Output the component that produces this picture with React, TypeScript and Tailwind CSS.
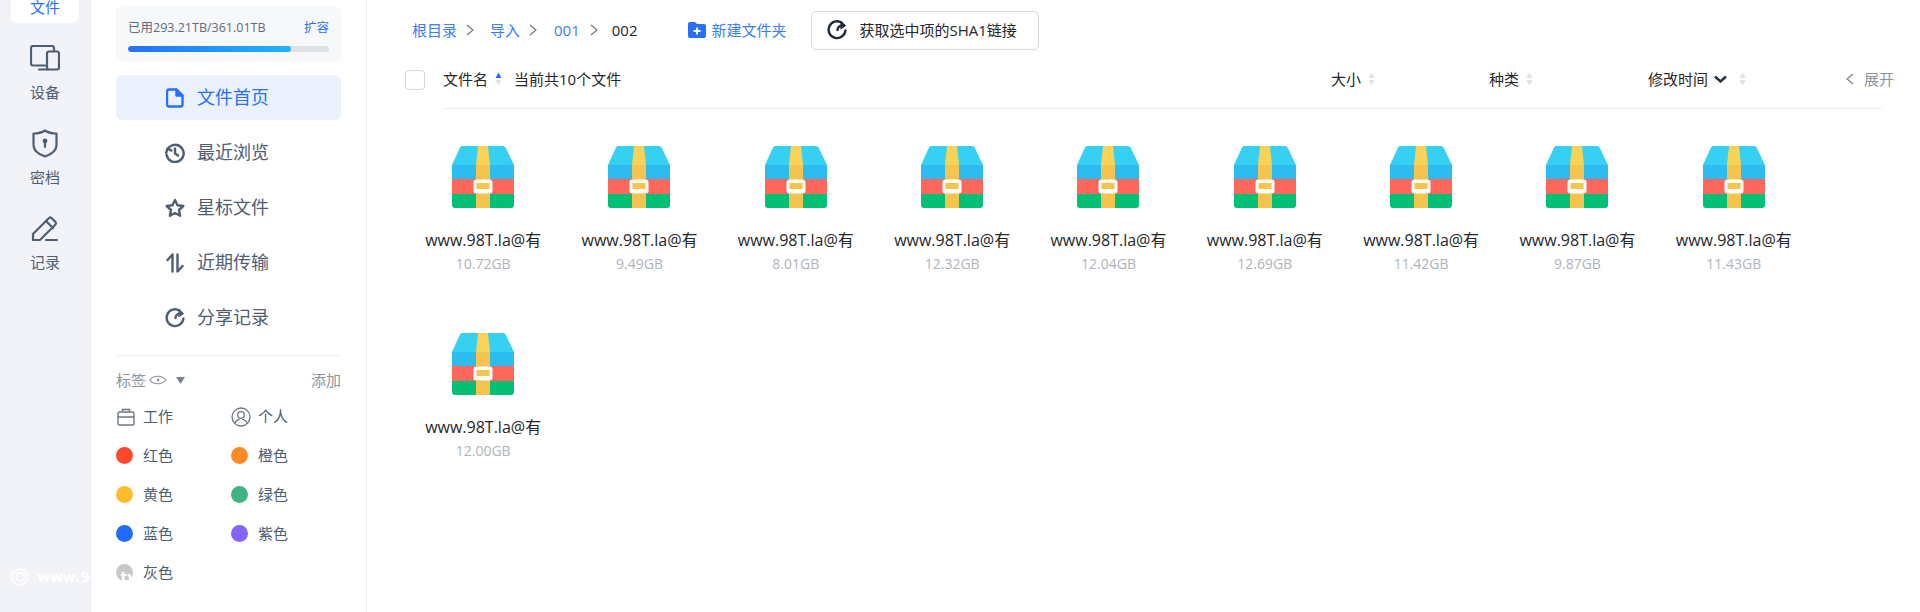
import React from "react";

const font = { fontFamily: '"Open Sans", "Noto Sans CJK SC", "Liberation Sans", sans-serif' };

function RailItem({ label, children }: { label: string; children: React.ReactNode }) {
  return (
    <div className="flex flex-col items-center h-[85px] text-[15px] leading-[20px] text-[#4d5d72]">
      <div className="h-[34px] flex items-center justify-center">{children}</div>
      <div className="mt-[7px]">{label}</div>
    </div>
  );
}

function NavItem({ label, active, children }: { label: string; active?: boolean; children: React.ReactNode }) {
  return (
    <div className={`h-[45px] mb-[10px] rounded-[6px] flex items-center pl-[49px] text-[18px] ${active ? "bg-[#ebf2fd] text-[#2670fb]" : "text-[#4d5d72]"}`}>
      <div className="w-[20px] h-[20px] mr-[12px] flex items-center justify-center">{children}</div>
      <span>{label}</span>
    </div>
  );
}

function Sort({ active }: { active?: boolean }) {
  return (
    <svg width="7" height="14" viewBox="0 0 7 14" className="ml-[7px]">
      <path d="M3.5 0.5 L6.5 6 L0.5 6 Z" fill={active ? "#2670fb" : "#dfe1e6"} />
      <path d="M3.5 13.5 L6.5 8 L0.5 8 Z" fill="#dfe1e6" />
    </svg>
  );
}

function RarIcon() {
  return (
    <svg width="62" height="64" viewBox="0 0 62 64">
      <path d="M10 1 H51 a3 3 0 0 1 2.6 1.5 L62 20 H0 L8 2.5 A3 3 0 0 1 10 1 Z" fill="#36d0f3" />
      <rect x="0" y="20" width="62" height="15" fill="#2dbcef" />
      <rect x="0" y="34" width="62" height="15" fill="#fe675c" />
      <path d="M0 49 H62 V60 a3 3 0 0 1 -3 3 H3 a3 3 0 0 1 -3 -3 Z" fill="#04c076" />
      <path d="M26 1 H36 L38 20 H24 Z" fill="#f8d358" />
      <rect x="24" y="20" width="14" height="43" fill="#f4c44e" />
      <rect x="21.5" y="34.5" width="19" height="14" rx="3" fill="#ffffff" />
      <rect x="24.5" y="38" width="13" height="6" fill="#f4c44e" />
    </svg>
  );
}

function FileCell({ size }: { size: string }) {
  return (
    <div className="h-[187px] flex flex-col items-center pt-[36px]">
      <RarIcon />
      <div className="mt-[20px] h-[22px] w-[122px] text-center overflow-hidden whitespace-nowrap text-[16px] leading-[22px] text-[#25262b]">www.98T.la@有</div>
      <div className="mt-[3px] text-[14px] leading-[20px] text-[#afb3bb]">{size}</div>
    </div>
  );
}

function Tag({ label, color, icon }: { label: string; color?: string; icon?: React.ReactNode }) {
  return (
    <div className="h-[39px] flex items-center text-[15px] text-[#4d5d72]">
      {color ? <span className="w-[17px] h-[17px] rounded-full mr-[10px]" style={{ backgroundColor: color }} /> : <span className="w-[20px] h-[20px] mr-[7px] flex items-center justify-center">{icon}</span>}
      <span>{label}</span>
    </div>
  );
}

const S = { fill: "none", stroke: "currentColor", strokeWidth: 2, strokeLinecap: "round", strokeLinejoin: "round" } as const;

function ShareIcon({ w }: { w: number }) {
  return (
    <svg width={w} height={w} viewBox="0 0 20 20" {...S} strokeWidth={2.4}>
      <path d="M14.5 2.6 A8.4 8.4 0 1 0 18.4 10.5" />
      <path d="M10.5 10 C10.5 7.5 12.5 5.8 15 5.8" />
      <path d="M14.2 1.6 L18.6 5.6 L14.2 8.8 Z" fill="currentColor" strokeWidth={1} />
    </svg>
  );
}

function Chevron() {
  return (
    <svg width="8" height="12" viewBox="0 0 8 12" fill="none" stroke="#6e7278" strokeWidth="1.1"><path d="M1 1 L7 6 L1 11" /></svg>
  );
}

export default function App() {
  const sizes = ["10.72GB", "9.49GB", "8.01GB", "12.32GB", "12.04GB", "12.69GB", "11.42GB", "9.87GB", "11.43GB", "12.00GB"];
  return (
    <div className="relative w-[1920px] h-[612px] overflow-hidden flex bg-white" style={font}>
      <aside className="w-[91px] shrink-0 bg-[#f1f3f8] border-r border-[#e9ebf0] flex flex-col items-center">
        <div className="w-[68px] h-[23px] bg-white rounded-b-[6px] text-center text-[15px] leading-[15px] text-[#2670fb]">文件</div>
        <div className="mt-[18px] w-full">
          <RailItem label="设备">
            <svg width="30" height="26" viewBox="0 0 30 26" className="text-[#4d5d72]" {...S} strokeWidth={2.2}>
              <path d="M15 20.5 H3 a2 2 0 0 1 -2 -2 V3 a2 2 0 0 1 2 -2 H22 a2 2 0 0 1 2 2 V6" />
              <rect x="17" y="6.5" width="12" height="18" rx="2" />
              <path d="M9 24.5 H17" />
            </svg>
          </RailItem>
          <RailItem label="密档">
            <svg width="26" height="29" viewBox="0 0 26 29" className="text-[#4d5d72]" {...S} strokeWidth={2.2}>
              <path d="M13 1.5 C16 3.5 20 4.5 24.5 4.5 V16 C24.5 21.5 19 25.5 13 27.5 C7 25.5 1.5 21.5 1.5 16 V4.5 C6 4.5 10 3.5 13 1.5 Z" />
              <circle cx="13" cy="12" r="2.4" fill="currentColor" stroke="none" />
              <path d="M13 12 V18" />
            </svg>
          </RailItem>
          <RailItem label="记录">
            <svg width="28" height="27" viewBox="0 0 28 27" className="text-[#4d5d72]" {...S} strokeWidth={2.2}>
              <path d="M2 25 V19 L18 3 a2 2 0 0 1 2.5 0 L24.5 7 a2 2 0 0 1 0 2.5 L9 25 Z" />
              <path d="M15 6 L22 13" />
              <path d="M15 25 H26" />
            </svg>
          </RailItem>
        </div>
      </aside>

      <nav className="w-[276px] shrink-0 border-r border-[#f0f0f2] px-[25px] pt-[6px]">
        <div className="h-[56px] rounded-[6px] bg-[#f7f8fa] px-[12px] pt-[14px]">
          <div className="flex justify-between text-[12.5px] leading-[16px]">
            <span className="text-[#5f6b7b]">已用293.21TB/361.01TB</span>
            <span className="text-[#2670fb]">扩容</span>
          </div>
          <div className="mt-[10px] h-[6px] rounded-full bg-[#dfe1e6] overflow-hidden">
            <div className="h-full w-[81%] rounded-full bg-gradient-to-r from-[#2670fb] to-[#25b3fb]" />
          </div>
        </div>
        <div className="mt-[13px]">
          <NavItem label="文件首页" active>
            <svg width="18" height="20" viewBox="0 0 18 20" {...S} strokeWidth={2.4}>
              <path d="M3 1.5 H10.5 L16.5 7.5 V16.5 a2 2 0 0 1 -2 2 H3 a2 2 0 0 1 -2 -2 V3.5 a2 2 0 0 1 2 -2 Z" />
              <path d="M10.5 1.5 L16.5 7.5 H10.5 Z" fill="currentColor" />
            </svg>
          </NavItem>
          <NavItem label="最近浏览">
            <svg width="20" height="20" viewBox="0 0 20 20" {...S} strokeWidth={2.4}>
              <path d="M3 5.5 A8.6 8.6 0 1 1 1.6 12" />
              <path d="M1.2 9.8 L2.6 5.4 L6.4 7.6" />
              <path d="M10 5.5 V10.5 L13 12.5" />
            </svg>
          </NavItem>
          <NavItem label="星标文件">
            <svg width="20" height="20" viewBox="0 0 20 20" {...S} strokeWidth={2.4}>
              <path d="M10 2 L12.5 7.2 L18.3 8 L14 12 L15.1 17.8 L10 15 L4.9 17.8 L6 12 L1.7 8 L7.5 7.2 Z" />
            </svg>
          </NavItem>
          <NavItem label="近期传输">
            <svg width="18" height="20" viewBox="0 0 18 20" {...S} strokeWidth={2.4}>
              <path d="M6.5 18.5 V1.5 L1.5 7" />
              <path d="M11.5 1.5 V18.5 L16.5 13" />
            </svg>
          </NavItem>
          <NavItem label="分享记录">
            <ShareIcon w={20} />
          </NavItem>
        </div>
        <div className="mt-[15px] border-t border-[#f0f0f2] pt-[14px]">
          <div className="flex items-center h-[20px] text-[15px] text-[#8d939c]">
            <span>标签</span>
            <svg width="18" height="14" viewBox="0 0 18 14" className="ml-[3px]" fill="none" stroke="#8d939c" strokeWidth="1.2">
              <path d="M1 7 C4 2 13 2 17 7 C13 12 4 12 1 7 Z" />
              <circle cx="9" cy="7" r="0.8" fill="#8d939c" />
            </svg>
            <svg width="9" height="7" viewBox="0 0 9 7" className="ml-[9px]"><path d="M0 0 H9 L4.5 7 Z" fill="#7d838c" /></svg>
            <span className="ml-auto">添加</span>
          </div>
          <div className="mt-[7px] grid grid-cols-[115px_1fr]">
            <Tag label="工作" icon={<svg width="18" height="18" viewBox="0 0 18 18" fill="none" stroke="#6f7882" strokeWidth="1.4"><rect x="1" y="4" width="16" height="13" rx="1.5" /><path d="M5.5 4 V1.5 H12.5 V4 M1 9 H17" /></svg>} />
            <Tag label="个人" icon={<svg width="20" height="20" viewBox="0 0 20 20" fill="none" stroke="#6f7882" strokeWidth="1.3"><circle cx="10" cy="10" r="9" /><circle cx="10" cy="8" r="3.3" /><path d="M4 16 C5 12.5 8 13 8.5 12 M16 16 C15 12.5 12 13 11.5 12" /></svg>} />
            <Tag label="红色" color="#fe472f" />
            <Tag label="橙色" color="#fa8a23" />
            <Tag label="黄色" color="#ffbc2c" />
            <Tag label="绿色" color="#3fb481" />
            <Tag label="蓝色" color="#226cfc" />
            <Tag label="紫色" color="#8664fb" />
            <Tag label="灰色" color="#c8c8c8" />
          </div>
        </div>
      </nav>

      <main className="flex-1 min-w-0 flex flex-col">
        <div className="h-[60px] flex items-center pl-[45px] text-[15px]">
          <span className="text-[#3b7dfb]">根目录</span>
          <span className="ml-[9px]"><Chevron /></span>
          <span className="ml-[16px] text-[#3b7dfb]">导入</span>
          <span className="ml-[9px]"><Chevron /></span>
          <span className="ml-[17px] text-[#3b7dfb]">001</span>
          <span className="ml-[10px]"><Chevron /></span>
          <span className="ml-[14px] text-[#25262b]">002</span>
          <svg width="18" height="18" viewBox="0 0 18 18" className="ml-[50px]"><path d="M2 1 H7 L9 3 H16 a2 2 0 0 1 2 2 V15 a2 2 0 0 1 -2 2 H2 a2 2 0 0 1 -2 -2 V3 a2 2 0 0 1 2 -2 Z" fill="#2670fb" /><path d="M9 6.5 V13.5 M5.5 10 H12.5" stroke="#fff" strokeWidth="2" /></svg>
          <span className="ml-[6px] text-[#3b7dfb]">新建文件夹</span>
          <button className="ml-[24px] h-[39px] w-[228px] rounded-[5px] border border-[#d6d8dd] flex items-center pl-[15px] text-[#25262b]">
            <span className="text-[#1f2b3a] flex"><ShareIcon w={20} /></span>
            <span className="ml-[13px]">获取选中项的SHA1链接</span>
          </button>
        </div>
        <div className="relative pl-[38px] flex items-start h-[49px] text-[15px] text-[#25262b]">
          <span className="mt-[10px] w-[20px] h-[20px] rounded-[4px] border border-[#d6d8dd]" />
          <div className="ml-[18px] mr-[38px] pt-[8px] flex items-start flex-1 h-full border-b border-[#ececef]">
            <div className="flex items-center h-[22px] flex-1">
              <span>文件名</span>
              <Sort active />
              <span className="ml-[12px]">当前共10个文件</span>
            </div>
            <span className="flex items-center h-[22px] w-[158px]">大小<Sort /></span>
            <span className="flex items-center h-[22px] w-[159px]">种类<Sort /></span>
            <span className="flex items-center h-[22px] w-[234px]">修改时间
              <svg width="13" height="8" viewBox="0 0 13 8" className="ml-[6px]" fill="none" stroke="#25303e" strokeWidth="2.4"><path d="M1 1.5 L6.5 6.5 L12 1.5" /></svg>
              <span className="ml-[5px]"><Sort /></span>
            </span>
          </div>
          <div className="absolute left-[1479px] top-[8px] h-[22px] flex items-center text-[#8d939c]">
            <svg width="8" height="12" viewBox="0 0 8 12" className="mr-[10px]" fill="none" stroke="#7d838c" strokeWidth="1.2"><path d="M7 1 L1 6 L7 11" /></svg>
            <span>展开</span>
          </div>
        </div>
        <div className="grid grid-cols-[repeat(9,156.33px)] ml-[38px]">
          {sizes.map((s, i) => <FileCell key={i} size={s} />)}
        </div>
      </main>

      <div className="absolute left-[11px] top-[568px] flex items-center text-white font-bold text-[14px] leading-[18px] pointer-events-none" style={{ fontFamily: '"DejaVu Sans", sans-serif' }}>
        <svg width="18" height="18" viewBox="0 0 18 18" fill="none" stroke="#ffffff" strokeWidth="1.6"><path d="M9 1 L14 2.5 L17 7 L16 13 L11.5 17 L5.5 16.5 L1.5 13 L1 6 L4.5 2.5 Z" /><circle cx="9.5" cy="9" r="4" /><path d="M6 5 C9 3.5 13 5 13.5 9" /></svg>
        <span className="ml-[8px]">www.98T<span className="ml-[6px]">.tv</span></span>
      </div>
    </div>
  );
}
